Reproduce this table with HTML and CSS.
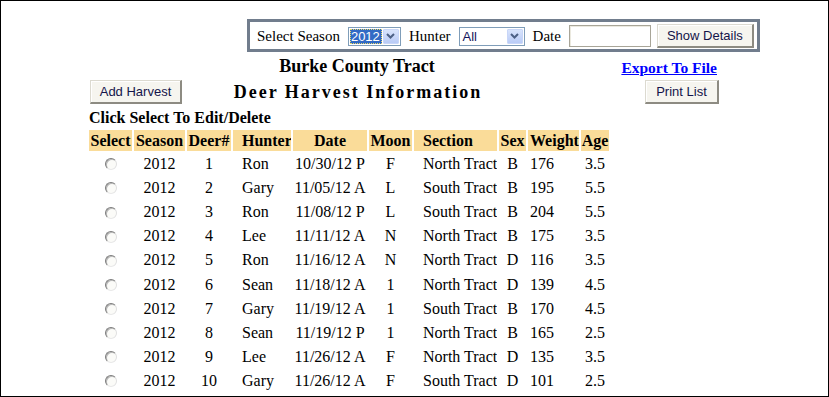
FILE: index.html
```html
<!DOCTYPE html>
<html>
<head>
<meta charset="utf-8">
<title>Deer Harvest Information</title>
<link rel="stylesheet" href="styles.css">
</head>
<body>
<div class="page">
  <div class="filter">
    <span class="lbl">Select Season</span>
    <span class="sel sel-season"><span class="val val-focus">2012</span><span class="arrow"><svg width="9" height="6" viewBox="0 0 9 6"><path d="M1 1 L4.5 4.5 L8 1" fill="none" stroke="#4d6185" stroke-width="2"/></svg></span></span>
    <span class="lbl">Hunter</span>
    <span class="sel sel-hunter"><span class="val">All</span><span class="arrow"><svg width="9" height="6" viewBox="0 0 9 6"><path d="M1 1 L4.5 4.5 L8 1" fill="none" stroke="#4d6185" stroke-width="2"/></svg></span></span>
    <span class="lbl">Date</span>
    <input class="date" type="text" value="">
    <button class="btn btn-show" type="button">Show Details</button>
  </div>

  <div class="content">
    <div class="head">
      <div></div>
      <div class="title">Burke County Tract</div>
      <div class="export"><a href="#">Export To File</a></div>
      <div class="cell-left"><button class="btn btn-add" type="button">Add Harvest</button></div>
      <div class="subtitle">Deer Harvest Information</div>
      <div class="cell-right"><button class="btn btn-print" type="button">Print List</button></div>
    </div>
    <div class="hint">Click Select To Edit/Delete</div>
    <table class="grid">
      <colgroup>
        <col class="c-sel"><col class="c-season"><col class="c-deer"><col class="c-hunter"><col class="c-date"><col class="c-moon"><col class="c-section"><col class="c-sex"><col class="c-weight"><col class="c-age">
      </colgroup>
      <thead>
        <tr>
          <th>Select</th><th>Season</th><th>Deer#</th><th class="left">Hunter</th><th>Date</th><th>Moon</th><th class="left">Section</th><th>Sex</th><th class="wt">Weight</th><th>Age</th>
        </tr>
      </thead>
      <tbody>
        <tr><td><input type="radio" name="s"></td><td>2012</td><td>1</td><td class="left">Ron</td><td>10/30/12 P</td><td>F</td><td class="left">North Tract</td><td>B</td><td class="wt">176</td><td>3.5</td></tr>
        <tr><td><input type="radio" name="s"></td><td>2012</td><td>2</td><td class="left">Gary</td><td>11/05/12 A</td><td>L</td><td class="left">South Tract</td><td>B</td><td class="wt">195</td><td>5.5</td></tr>
        <tr><td><input type="radio" name="s"></td><td>2012</td><td>3</td><td class="left">Ron</td><td>11/08/12 P</td><td>L</td><td class="left">South Tract</td><td>B</td><td class="wt">204</td><td>5.5</td></tr>
        <tr><td><input type="radio" name="s"></td><td>2012</td><td>4</td><td class="left">Lee</td><td>11/11/12 A</td><td>N</td><td class="left">North Tract</td><td>B</td><td class="wt">175</td><td>3.5</td></tr>
        <tr><td><input type="radio" name="s"></td><td>2012</td><td>5</td><td class="left">Ron</td><td>11/16/12 A</td><td>N</td><td class="left">North Tract</td><td>D</td><td class="wt">116</td><td>3.5</td></tr>
        <tr><td><input type="radio" name="s"></td><td>2012</td><td>6</td><td class="left">Sean</td><td>11/18/12 A</td><td>1</td><td class="left">North Tract</td><td>D</td><td class="wt">139</td><td>4.5</td></tr>
        <tr><td><input type="radio" name="s"></td><td>2012</td><td>7</td><td class="left">Gary</td><td>11/19/12 A</td><td>1</td><td class="left">South Tract</td><td>B</td><td class="wt">170</td><td>4.5</td></tr>
        <tr><td><input type="radio" name="s"></td><td>2012</td><td>8</td><td class="left">Sean</td><td>11/19/12 P</td><td>1</td><td class="left">North Tract</td><td>B</td><td class="wt">165</td><td>2.5</td></tr>
        <tr><td><input type="radio" name="s"></td><td>2012</td><td>9</td><td class="left">Lee</td><td>11/26/12 A</td><td>F</td><td class="left">North Tract</td><td>D</td><td class="wt">135</td><td>3.5</td></tr>
        <tr><td><input type="radio" name="s"></td><td>2012</td><td>10</td><td class="left">Gary</td><td>11/26/12 A</td><td>F</td><td class="left">South Tract</td><td>D</td><td class="wt">101</td><td>2.5</td></tr>
      </tbody>
    </table>
  </div>
</div>
</body>
</html>
```

FILE: styles.css
```css
html, body {
  margin: 0;
  padding: 0;
  background: #fff;
}
body {
  font-family: "Liberation Serif", "Times New Roman", serif;
  font-size: 16px;
  color: #000;
}
.page {
  box-sizing: border-box;
  width: 829px;
  height: 397px;
  border: 1px solid #000;
  overflow: hidden;
  padding-top: 18px;
}

/* filter bar */
.filter {
  box-sizing: border-box;
  margin-left: 246px;
  width: 513px;
  height: 33px;
  border: 3px solid #717d8d;
  display: flex;
  align-items: center;
  padding: 1px 0 0 7px;
}
.lbl {
  font-size: 15px;
  line-height: 18px;
  white-space: nowrap;
  flex: 0 0 auto;
}
.sel {
  box-sizing: border-box;
  flex: 0 0 auto;
  height: 19px;
  border: 1px solid #7f9db9;
  display: flex;
  align-items: stretch;
  padding: 1px;
  margin-left: 8px;
  margin-right: 8px;
  background: #fff;
  font-family: "Liberation Sans", Arial, sans-serif;
  font-size: 13px;
}
.sel-season { width: 53px; }
.sel-hunter { width: 66px; }
.val {
  flex: 1;
  line-height: 15px;
  padding-left: 2px;
  color: #14145a;
}
.val-focus {
  flex: 0 0 auto;
  width: 31px;
  padding-left: 1px;
  margin-right: 1px;
  background: #316ac5;
  color: #fff;
  outline: 1px dotted #e8d86a;
  outline-offset: -1px;
}
.arrow {
  flex: 0 0 auto;
  width: 16px;
  margin-left: auto;
  box-sizing: border-box;
  border: 1px solid #c8d6f8;
  border-radius: 1px;
  background: linear-gradient(#d9e4fc, #b9cbf6);
  display: flex;
  align-items: center;
  justify-content: center;
}
.date {
  box-sizing: border-box;
  flex: 0 0 auto;
  width: 82px;
  height: 22px;
  margin: 0 6px 0 8px;
  padding: 0;
  border: 1px solid #a8a598;
  box-shadow: inset 1px 1px 0 #ebe9df;
  background: #fff;
}
.btn {
  box-sizing: border-box;
  flex: 0 0 auto;
  height: 24px;
  padding: 0;
  margin: 0;
  white-space: nowrap;
  text-align: center;
  font-family: "Liberation Sans", Arial, sans-serif;
  font-size: 13px;
  color: #14144a;
  background: #f6f5ef;
  border-style: solid;
  border-width: 1px 2px 2px 1px;
  border-color: #dcdad0 #8d8b82 #8d8b82 #dcdad0;
  box-shadow: inset 1px 1px 0 #fff;
  border-radius: 0;
  cursor: pointer;
}
.btn-show { width: 97px; }
.btn-add { width: 92px; }
.btn-print { width: 74px; }

/* page content */
.content {
  padding-left: 88px;
}
.head {
  display: grid;
  grid-template-columns: 111px 314px 205px;
  grid-template-rows: 22px 28px;
  margin-top: 4px;
}
.title {
  font-size: 18px;
  font-weight: bold;
  line-height: 21px;
  text-align: center;
}
.export {
  text-align: right;
  padding-right: 2px;
  padding-top: 1px;
  font-size: 15.5px;
  font-weight: bold;
  line-height: 21px;
}
.export a {
  color: #0000ff;
  text-decoration: underline;
}
.cell-left {
  display: flex;
  align-items: center;
  padding-left: 1px;
}
.cell-right {
  display: flex;
  align-items: center;
  justify-content: flex-end;
}
.subtitle {
  display: flex;
  align-items: center;
  justify-content: center;
  font-size: 18px;
  font-weight: bold;
  letter-spacing: 2px;
  padding-left: 2px;
  padding-top: 1px;
}
.hint {
  font-weight: bold;
  line-height: 18px;
  margin-top: 3px;
}

/* table */
.grid {
  margin-top: 1px;
  margin-left: -2px;
  border-collapse: separate;
  border-spacing: 2px;
  table-layout: fixed;
  width: 524px;
}
.c-sel { width: 43px; }
.c-season { width: 51px; }
.c-deer { width: 44px; }
.c-hunter { width: 58px; }
.c-date { width: 74px; }
.c-moon { width: 43px; }
.c-section { width: 83px; }
.c-sex { width: 27px; }
.c-weight { width: 51px; }
.c-age { width: 28px; }
.grid th, .grid td {
  padding: 0;
  text-align: center;
  white-space: nowrap;
  overflow: hidden;
  line-height: 18px;
}
.grid th {
  height: 21px;
  background: #fadc99;
  font-weight: bold;
}
.grid td {
  height: 22.1px;
}
.grid .left {
  text-align: left;
  padding-left: 9px;
}
.grid .wt {
  text-align: left;
  padding-left: 2px;
}
.grid input[type="radio"] {
  -webkit-appearance: none;
  appearance: none;
  box-sizing: border-box;
  width: 12px;
  height: 12px;
  margin: 0;
  padding: 0;
  border-radius: 50%;
  border: 1px solid;
  border-color: #7c7c7c #e0e0e0 #e8e8e8 #7c7c7c;
  box-shadow: inset 1px 1px 0 #b8b8b8;
  background: #fbfbf8;
  vertical-align: middle;
  position: relative;
  top: -1px;
}
```
